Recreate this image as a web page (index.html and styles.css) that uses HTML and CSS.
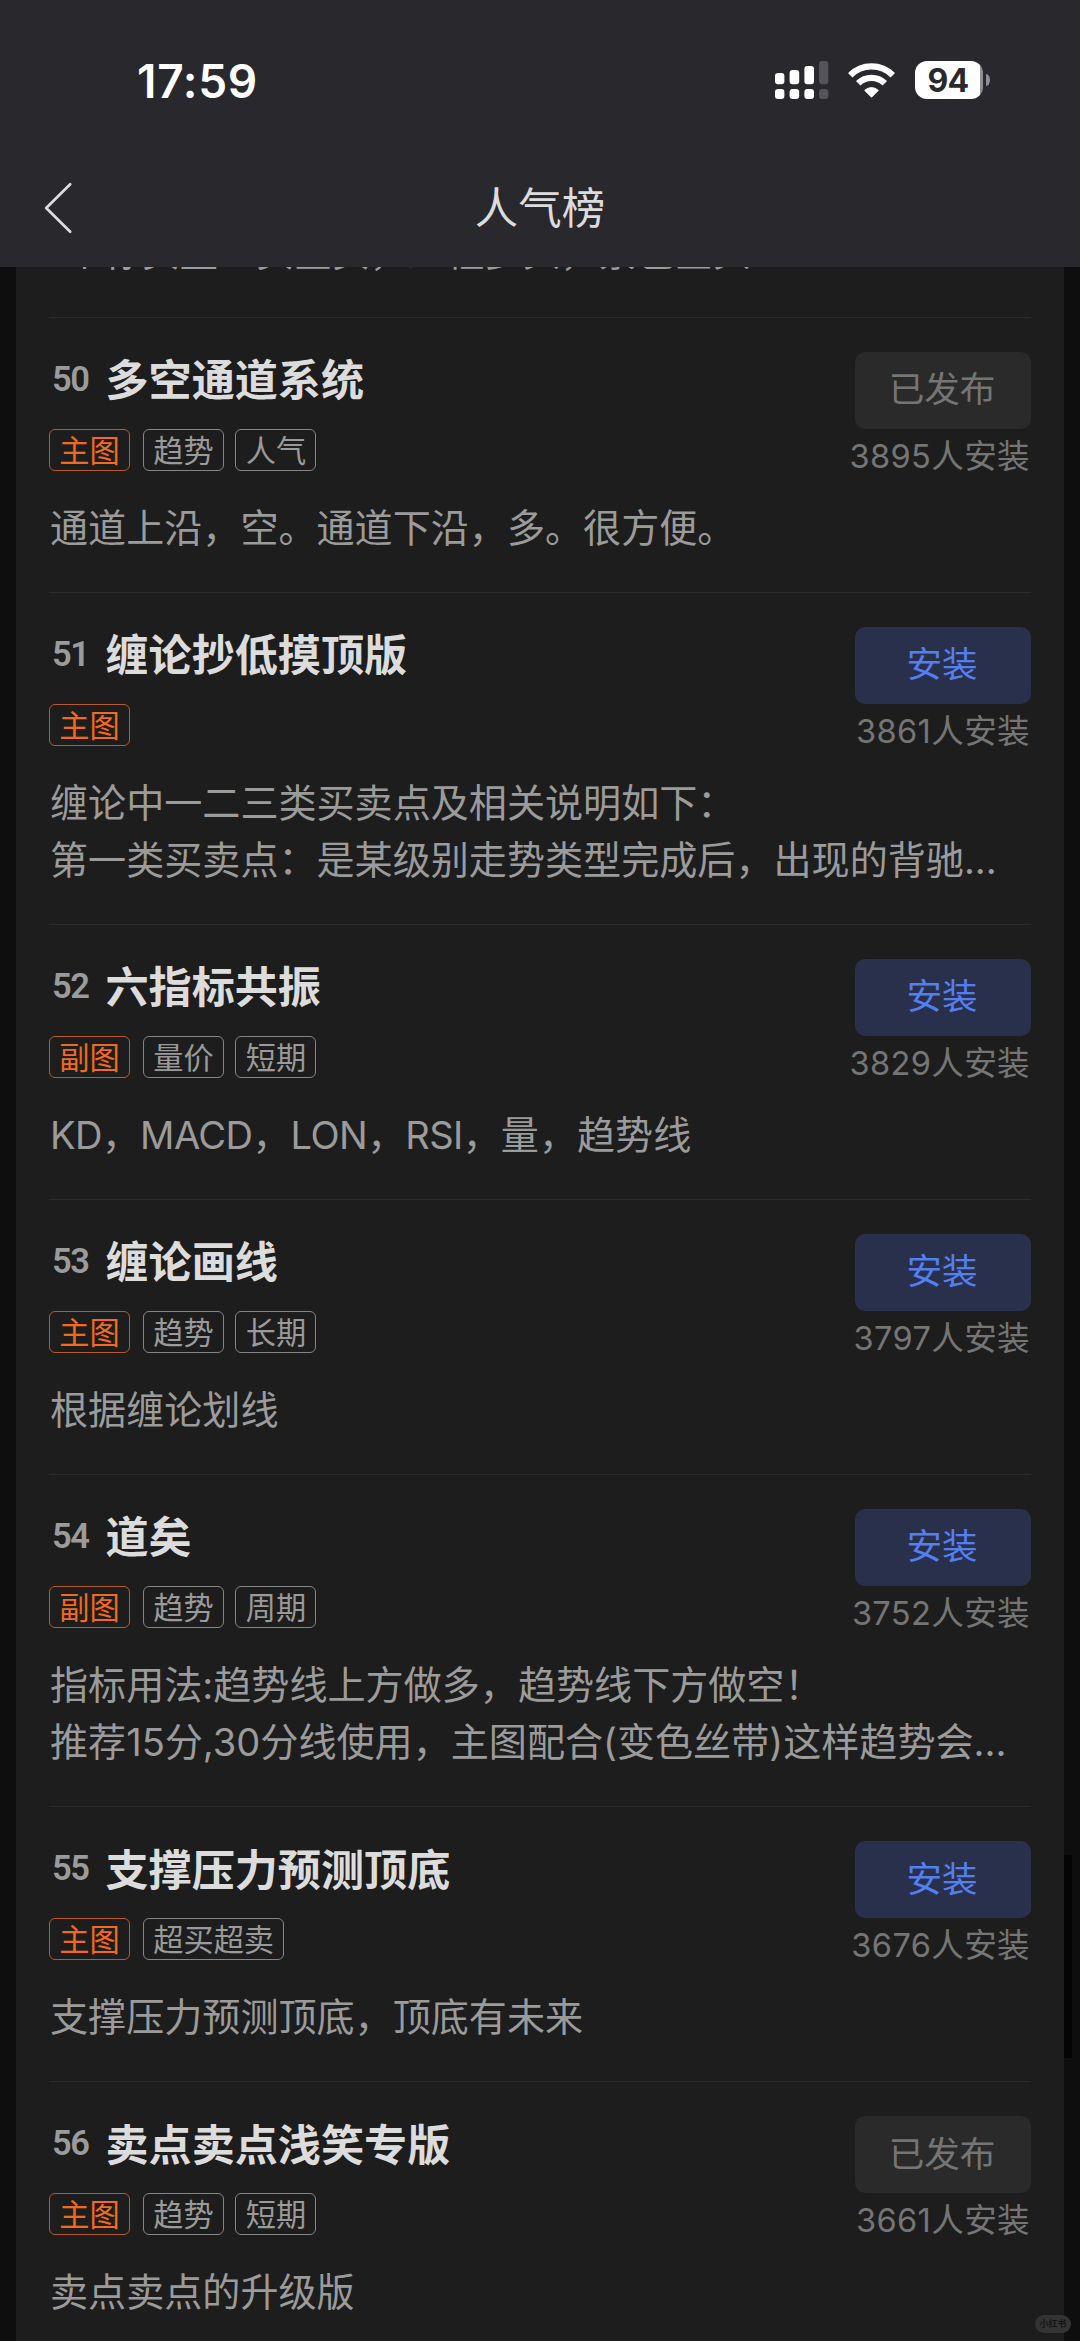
FILE: index.html
```html
<!DOCTYPE html>
<html lang="zh-CN">
<head>
<meta charset="utf-8">
<title>人气榜</title>
<link rel="stylesheet" href="styles.css">
</head>
<body>
<header class="header">
  <div class="status">
    <span class="time">17:59</span>
    <div class="status-icons">
      <svg class="signal" width="54" height="38" viewBox="0 0 54 38" fill="#fff">
        <rect x="0" y="12" width="9.4" height="11.3" rx="3"/><rect x="14.6" y="9" width="9.6" height="14.3" rx="3"/><rect x="29.4" y="5" width="9.6" height="18.3" rx="3"/>
        <rect x="0" y="28" width="9.4" height="10" rx="3"/><rect x="14.6" y="28" width="9.6" height="10" rx="3"/><rect x="29.4" y="28" width="9.6" height="10" rx="3"/>
        <g fill="#55545a"><rect x="44.1" y="0" width="9.2" height="23.3" rx="3"/><rect x="44.1" y="28" width="9.2" height="10" rx="3"/></g>
      </svg>
      <svg class="wifi" width="47" height="38" viewBox="0 0 47 38">
        <g fill="none" stroke="#fff" stroke-width="6.3">
          <path d="M2.2 14.3A30 30 0 0 1 44.8 14.3"/>
          <path d="M10.2 22.3A18.8 18.8 0 0 1 36.8 22.3"/>
        </g>
        <path d="M23.5 36.2L16.7 29.4A9.7 9.7 0 0 1 30.3 29.4Z" fill="#fff" stroke="#fff" stroke-width="1" stroke-linejoin="round"/>
      </svg>
      <div class="battery"><span class="battery-level">94</span><i class="battery-cap"></i></div>
    </div>
  </div>
  <nav class="nav">
    <svg class="back" width="30" height="54" viewBox="0 0 30 54" fill="none" stroke="#dcdbde" stroke-width="2.7" stroke-linecap="round" stroke-linejoin="round"><path d="M26.2 3.2L2.2 27L26.2 50.8"/></svg>
    <h1 class="nav-title">人气榜</h1>
  </nav>
</header>
<main class="list">
  <article class="item item-cut">
    <p class="desc">1个标买量三买金买，红柱多头，紫色空头</p>
  </article>
  <article class="item">
    <div class="head">
      <div class="info"><h2 class="name"><span class="rank">50</span>多空通道系统</h2>
        <div class="tags"><span class="tag tag-main">主图</span><span class="tag">趋势</span><span class="tag">人气</span></div></div>
      <div class="action"><button class="btn btn-done">已发布</button><span class="count">3895人安装</span></div>
    </div>
    <p class="desc">通道上沿，空。通道下沿，多。很方便。</p>
  </article>
  <article class="item">
    <div class="head">
      <div class="info"><h2 class="name"><span class="rank">51</span>缠论抄低摸顶版</h2>
        <div class="tags"><span class="tag tag-main">主图</span></div></div>
      <div class="action"><button class="btn">安装</button><span class="count">3861人安装</span></div>
    </div>
    <p class="desc">缠论中一二三类买卖点及相关说明如下：<br>第一类买卖点：是某级别走势类型完成后，出现的背驰<span class="dots">...</span></p>
  </article>
  <article class="item">
    <div class="head">
      <div class="info"><h2 class="name"><span class="rank">52</span>六指标共振</h2>
        <div class="tags"><span class="tag tag-main">副图</span><span class="tag">量价</span><span class="tag">短期</span></div></div>
      <div class="action"><button class="btn">安装</button><span class="count">3829人安装</span></div>
    </div>
    <p class="desc"><span class="latin">KD</span>，<span class="latin">MACD</span>，<span class="latin">LON</span>，<span class="latin">RSI</span>，量，趋势线</p>
  </article>
  <article class="item">
    <div class="head">
      <div class="info"><h2 class="name"><span class="rank">53</span>缠论画线</h2>
        <div class="tags"><span class="tag tag-main">主图</span><span class="tag">趋势</span><span class="tag">长期</span></div></div>
      <div class="action"><button class="btn">安装</button><span class="count">3797人安装</span></div>
    </div>
    <p class="desc">根据缠论划线</p>
  </article>
  <article class="item">
    <div class="head">
      <div class="info"><h2 class="name"><span class="rank">54</span>道矣</h2>
        <div class="tags"><span class="tag tag-main">副图</span><span class="tag">趋势</span><span class="tag">周期</span></div></div>
      <div class="action"><button class="btn">安装</button><span class="count">3752人安装</span></div>
    </div>
    <p class="desc">指标用法:趋势线上方做多，趋势线下方做空！<br>推荐15分,30分线使用，主图配合(变色丝带)这样趋势会<span class="dots">...</span></p>
  </article>
  <article class="item">
    <div class="head">
      <div class="info"><h2 class="name"><span class="rank">55</span>支撑压力预测顶底</h2>
        <div class="tags"><span class="tag tag-main">主图</span><span class="tag">超买超卖</span></div></div>
      <div class="action"><button class="btn">安装</button><span class="count">3676人安装</span></div>
    </div>
    <p class="desc">支撑压力预测顶底，顶底有未来</p>
  </article>
  <article class="item">
    <div class="head">
      <div class="info"><h2 class="name"><span class="rank">56</span>卖点卖点浅笑专版</h2>
        <div class="tags"><span class="tag tag-main">主图</span><span class="tag">趋势</span><span class="tag">短期</span></div></div>
      <div class="action"><button class="btn btn-done">已发布</button><span class="count">3661人安装</span></div>
    </div>
    <p class="desc">卖点卖点的升级版</p>
  </article>
</main>
<div class="scrollbar"></div>
<div class="watermark">小红书</div>
</body>
</html>
```

FILE: styles.css
```css
* { box-sizing: border-box; margin: 0; padding: 0; }

body {
  position: relative;
  display: flex;
  flex-direction: column;
  width: 1080px;
  height: 2341px;
  overflow: hidden;
  background: #0e0e0e;
  font-family: Inter, "Noto Sans CJK SC", sans-serif;
}

.header { flex: none; height: 267px; background: #29282d; }

.status {
  display: flex;
  align-items: center;
  justify-content: space-between;
  height: 160px;
  padding: 0 90px 0 137px;
}
.time { padding-top: 2px; color: #fff; font-size: 46px; font-weight: 600; letter-spacing: 0.7px; line-height: 60px; }
.status-icons { display: flex; align-items: center; }
.wifi { margin: 0 20px 0 19.5px; }
.battery { display: flex; align-items: center; gap: 3px; }
.battery-level {
  width: 68px;
  height: 38px;
  padding-right: 2px;
  border-radius: 12px;
  background: linear-gradient(90deg, #fff 65px, #8f8e92 65px);
  color: #29282d;
  font-size: 32px;
  font-weight: 700;
  letter-spacing: -0.7px;
  line-height: 39px;
  text-align: center;
}
.battery-cap { width: 4px; height: 12px; border-radius: 0 4px 4px 0 / 0 6px 6px 0; background: #8f8e92; }

.nav {
  display: grid;
  grid-template-columns: 1fr auto 1fr;
  align-items: center;
  height: 96px;
  padding: 0 44px;
}
.nav-title { color: #dcdbde; font-size: 43.5px; font-weight: 400; line-height: 60px; }

.list {
  flex: 1;
  width: 1048px;
  margin: 0 auto;
  padding: 0 33px;
  background: #1d1d1d;
  overflow: hidden;
}
.item { padding: 34px 0 34.8px; border-top: 1px solid #2a2a2a; }
.item-cut { margin-top: -43.5px; padding-top: 0; padding-bottom: 36px; border-top: 0; }

.head { display: flex; justify-content: space-between; height: 148px; }
.info { display: flex; flex-direction: column; }
.name {
  display: flex;
  align-items: center;
  height: 57px;
  margin-bottom: 20px;
  color: #dcdcdc;
  font-size: 43.1px;
  font-weight: 700;
  line-height: 56px;
}
.rank {
  width: 56.5px;
  padding: 0 0 3px 3px;
  color: #9b9b9b;
  font-family: Roboto, sans-serif;
  font-size: 34.5px;
  font-weight: 600;
  letter-spacing: -1.5px;
}
.tags { display: flex; gap: 11.5px; }
.tag {
  height: 42px;
  padding: 0 9.3px;
  border: 1px solid #858585;
  border-radius: 6px;
  color: #9a9a9a;
  font-size: 30.2px;
  line-height: 42px;
}
.tag-main { margin-right: 1.5px; border-color: #b75a26; color: #f3691f; }

.action { display: flex; flex-direction: column; align-items: flex-end; }
.btn {
  width: 176px;
  height: 77px;
  padding-right: 2px;
  border: 0;
  border-radius: 10px;
  background: #29304b;
  color: #557ff0;
  font: inherit;
  font-size: 35.6px;
  line-height: 74px;
}
.btn-done { background: #2a2a2a; color: #757575; }
.count { margin-top: 5px; padding-right: 1px; color: #757575; font-size: 32.6px; letter-spacing: 0.35px; line-height: 44px; }

.desc { padding-left: 1px; color: #9b9b9b; font-size: 38.1px; line-height: 57.2px; white-space: nowrap; }
.latin { letter-spacing: -0.55px; }

.scrollbar { position: absolute; left: 1064px; top: 1855px; width: 8px; height: 203px; background: #040404; }
.watermark {
  position: absolute;
  left: 1035px;
  top: 2315px;
  width: 36px;
  height: 18px;
  border-radius: 9px;
  background: #343434;
  color: #141414;
  font-size: 9px;
  font-weight: 700;
  line-height: 17px;
  text-align: center;
}
```
